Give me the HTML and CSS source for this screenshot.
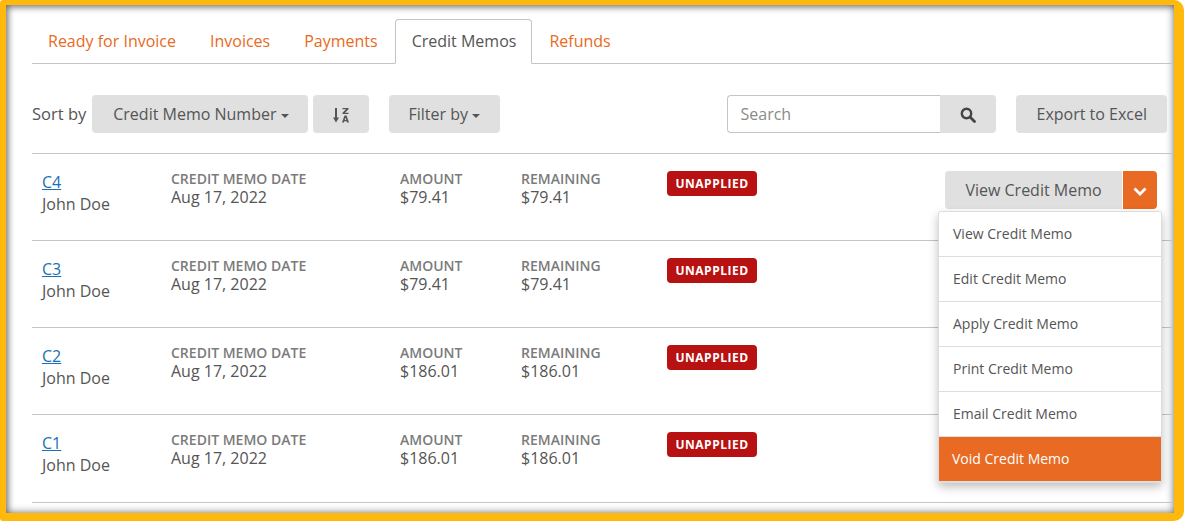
FILE: index.html
```html
<!DOCTYPE html>
<html lang="en">
<head>
  <meta charset="UTF-8">
  <title>Credit Memos</title>
  <link rel="stylesheet" href="styles.css">
</head>
<body>
  <div class="frame">
    <div class="tabs">
      <a class="tab" href="#">Ready for Invoice</a>
      <a class="tab" href="#">Invoices</a>
      <a class="tab" href="#">Payments</a>
      <a class="tab active" href="#">Credit Memos</a>
      <a class="tab" href="#">Refunds</a>
    </div>

    <div class="toolbar">
      <span class="sort-label">Sort by</span>
      <button class="btn sort-field">Credit Memo Number<span class="caret"></span></button>
      <button class="btn sort-dir" aria-label="Sort direction">
        <svg width="16" height="15" viewBox="0 0 16 15">
          <path d="M3 0v13" fill="none" stroke="#555" stroke-width="2"/>
          <path d="M0 9.500h6L3 14.500z" fill="#555"/>
          <path d="M9.500 0h6v1.300L12 4.700h3.500V6h-6V4.700L13 1.300H9.500z" fill="#555"/>
          <path d="M11.500 7.500h2l2.500 7h-1.900l-.4-1.300h-2.400l-.4 1.300H9zM11.700 11.900h1.600l-.8-2.500z" fill="#555" fill-rule="evenodd"/>
        </svg>
      </button>
      <button class="btn filter">Filter by<span class="caret"></span></button>
      <div class="search">
        <input class="search-input" type="text" placeholder="Search">
        <button class="search-btn" aria-label="Search">
          <svg width="16" height="16" viewBox="0 0 16 16">
            <circle cx="6.500" cy="6.500" r="4.700" fill="none" stroke="#444" stroke-width="2.400"/>
            <path d="M10 10l4.500 4.500" stroke="#444" stroke-width="2.800" stroke-linecap="round"/>
          </svg>
        </button>
      </div>
      <button class="btn export">Export to Excel</button>
    </div>

    <div class="memo">
      <div class="who"><a href="#">C4</a><div>John Doe</div></div>
      <div class="field"><span class="label">Credit Memo Date</span><span>Aug 17, 2022</span></div>
      <div class="field"><span class="label">Amount</span><span>$79.41</span></div>
      <div class="field"><span class="label">Remaining</span><span>$79.41</span></div>
      <div><span class="badge">UNAPPLIED</span></div>
      <div class="actions">
        <button class="view-btn">View Credit Memo</button>
        <button class="toggle" aria-label="More">
          <svg width="14" height="9" viewBox="0 0 14 9"><path d="M1.500 1.500 7 7l5.500-5.500" fill="none" stroke="#fff" stroke-width="2.800"/></svg>
        </button>
      </div>
    </div>
    <div class="memo">
      <div class="who"><a href="#">C3</a><div>John Doe</div></div>
      <div class="field"><span class="label">Credit Memo Date</span><span>Aug 17, 2022</span></div>
      <div class="field"><span class="label">Amount</span><span>$79.41</span></div>
      <div class="field"><span class="label">Remaining</span><span>$79.41</span></div>
      <div><span class="badge">UNAPPLIED</span></div>
    </div>
    <div class="memo">
      <div class="who"><a href="#">C2</a><div>John Doe</div></div>
      <div class="field"><span class="label">Credit Memo Date</span><span>Aug 17, 2022</span></div>
      <div class="field"><span class="label">Amount</span><span>$186.01</span></div>
      <div class="field"><span class="label">Remaining</span><span>$186.01</span></div>
      <div><span class="badge">UNAPPLIED</span></div>
    </div>
    <div class="memo">
      <div class="who"><a href="#">C1</a><div>John Doe</div></div>
      <div class="field"><span class="label">Credit Memo Date</span><span>Aug 17, 2022</span></div>
      <div class="field"><span class="label">Amount</span><span>$186.01</span></div>
      <div class="field"><span class="label">Remaining</span><span>$186.01</span></div>
      <div><span class="badge">UNAPPLIED</span></div>
    </div>

    <!-- open menu of the first row -->
    <ul class="menu">
      <li>View Credit Memo</li>
      <li>Edit Credit Memo</li>
      <li>Apply Credit Memo</li>
      <li>Print Credit Memo</li>
      <li>Email Credit Memo</li>
      <li class="selected">Void Credit Memo</li>
    </ul>
  </div>
</body>
</html>
```

FILE: styles.css
```css
* {
  box-sizing: border-box;
}
html, body {
  margin: 0;
  height: 100%;
}
body {
  font-family: "Open Sans", sans-serif;
  font-size: 16px;
  color: #555;
  background: #fff;
  overflow: hidden;
}
button {
  font-family: inherit;
}
.frame {
  position: relative;
  height: 521px;
  padding: 14px 2px 0 26px;
  background: #fff;
  border-style: solid;
  border-color: #ffb80c;
  border-width: 5px 10px 8px 6px;
  border-radius: 3px 10px 10px 3px;
  box-shadow: inset 0 0 8px rgba(0,0,0,0.5), inset 2px 2px 6px rgba(0,0,0,0.3);
}
.tabs {
  display: flex;
  height: 45px;
  border-bottom: 1px solid #c4c4c4;
}
.tab {
  height: 45px;
  padding: 0 15px;
  line-height: 43px;
  margin-right: 2px;
  color: #e96a22;
  text-decoration: none;
  border: 1px solid transparent;
  border-radius: 4px 4px 0 0;
}
.tab.active {
  margin-left: -1px;
  margin-right: 1px;
  padding-left: 16px;
  color: #555;
  background: #fff;
  border-color: #c4c4c4 #c4c4c4 #fff;
}
.toolbar {
  display: flex;
  align-items: flex-start;
  height: 90px;
  padding: 31px 5px 0 0;
  border-bottom: 1px solid #c4c4c4;
}
.sort-label {
  margin-right: 6px;
  font-size: 16.500px;
  line-height: 38px;
}
.btn {
  height: 38px;
  padding: 0 20px;
  font-size: 16px;
  color: #555;
  background: #e0e0e0;
  border: 0;
  border-radius: 4px;
}
.sort-field {
  padding: 0 19px 0 21px;
}
.sort-dir {
  width: 56px;
  margin-left: 5px;
  padding: 0;
}
.sort-dir svg {
  vertical-align: middle;
}
.filter {
  margin-left: 20px;
}
.caret {
  display: inline-block;
  margin-left: 4px;
  vertical-align: middle;
  border-top: 4px solid #555;
  border-left: 4px solid transparent;
  border-right: 4px solid transparent;
}
.search {
  display: flex;
  margin-left: auto;
  margin-right: 20px;
}
.search-input {
  width: 213px;
  height: 38px;
  padding: 0 12px;
  font-family: inherit;
  font-size: 16px;
  color: #555;
  border: 1px solid #c4c4c4;
  border-right: 0;
  border-radius: 4px 0 0 4px;
  outline: none;
}
.search-input::placeholder {
  color: #8a8a8a;
}
.search-btn {
  width: 56px;
  height: 38px;
  padding: 0;
  background: #e0e0e0;
  border: 0;
  border-radius: 0 4px 4px 0;
}
.search-btn svg {
  vertical-align: middle;
}
.memo {
  display: grid;
  grid-template-columns: 139px 229px 121px 146px 1fr;
  height: 87px;
  padding-top: 17px;
  line-height: 18px;
  border-bottom: 1px solid #c4c4c4;
}
.memo:last-of-type {
  height: 88px;
}
.who {
  padding-left: 10px;
  line-height: 22px;
}
.who a {
  color: #1a6fb5;
}
.field {
  display: flex;
  flex-direction: column;
  margin-top: -1px;
}
.label {
  font-size: 14px;
  font-weight: 600;
  color: #7b7b7b;
  text-transform: uppercase;
}
.badge {
  display: inline-block;
  width: 90px;
  height: 25px;
  line-height: 25px;
  text-align: center;
  font-size: 12px;
  font-weight: 700;
  letter-spacing: 0.500px;
  color: #fff;
  background: #b71111;
  border-radius: 4px;
}
.actions {
  position: absolute;
  top: 166px;
  left: 939px;
  display: flex;
  height: 38px;
}
.view-btn {
  width: 177px;
  font-size: 16px;
  color: #555;
  background: #e0e0e0;
  border: 0;
  border-radius: 4px 0 0 4px;
}
.toggle {
  width: 35px;
  padding: 0;
  background: #e96a22;
  border: 0;
  border-left: 1px solid #fff;
  border-radius: 0 4px 4px 0;
}
.toggle svg {
  vertical-align: middle;
}
.menu {
  position: absolute;
  top: 206px;
  left: 932px;
  width: 224px;
  margin: 0;
  padding: 0;
  list-style: none;
  font-size: 14px;
  background: #fff;
  border: 1px solid #ddd;
  border-radius: 3px;
  box-shadow: 0 4px 10px rgba(0,0,0,0.25);
}
.menu li {
  height: 45px;
  padding-left: 14px;
  line-height: 44px;
  border-bottom: 1px solid #ddd;
}
.menu .selected {
  padding-left: 13px;
  color: #fff;
  background: #e96a22;
}
```
